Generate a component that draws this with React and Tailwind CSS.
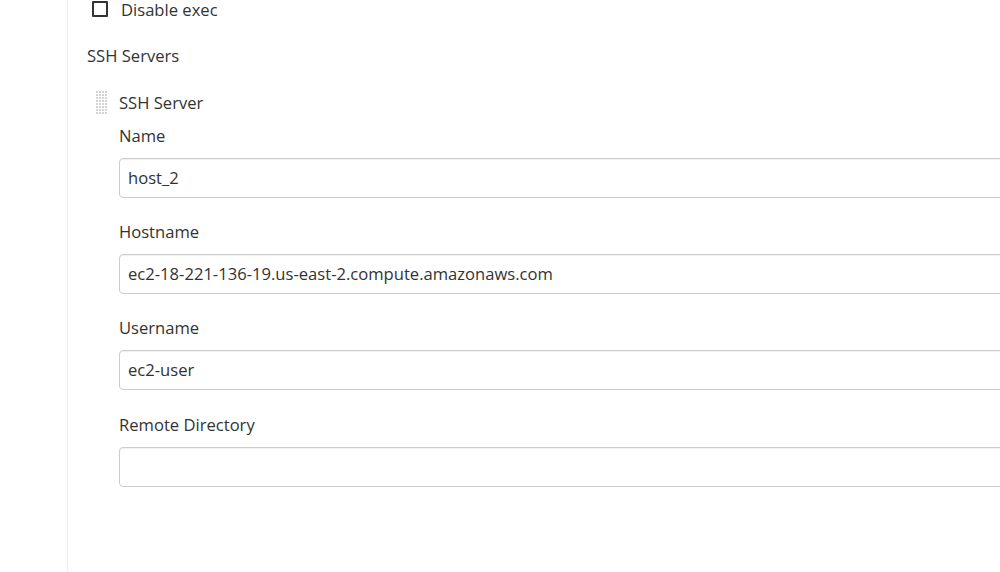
const fields = [
  { label: "Name", value: "host_2" },
  { label: "Hostname", value: "ec2-18-221-136-19.us-east-2.compute.amazonaws.com" },
  { label: "Username", value: "ec2-user" },
  { label: "Remote Directory", value: "" },
];

const DragHandle = () => (
  <svg width="12" height="24" viewBox="0 0 12 24" className="shrink-0">
    <defs>
      <pattern id="dots" width="3" height="3" patternUnits="userSpaceOnUse">
        <rect x="0" y="0" width="2" height="2" fill="#d4d4d4" />
      </pattern>
    </defs>
    <rect x="0" y="0" width="12" height="24" fill="url(#dots)" />
  </svg>
);

export default function App() {
  return (
    <div
      className="w-[1000px] h-[572px] overflow-hidden bg-white flex text-[#333] text-[16.6px]"
      style={{ fontFamily: '"Open Sans", "Noto Sans", sans-serif' }}
    >
      <div className="w-[68px] shrink-0 border-r border-[#ececec]" />
      <div className="flex-1 pl-[19px] min-w-0">
        <div className="flex items-center h-5 ml-[5px]">
          <span className="w-4 h-4 border-2 border-[#333] rounded-[1px] shrink-0 -mt-[2px]" />
          <span className="ml-[13px] leading-5">Disable exec</span>
        </div>
        <div className="mt-[26px] leading-5">SSH Servers</div>
        <div className="mt-[25px] flex items-center h-6 pl-[9px]">
          <DragHandle />
          <span className="ml-[11px] leading-5">SSH Server</span>
        </div>
        <div className="pl-[32px] mt-[11px]">
          {fields.map((f, i) => (
            <div key={f.label} className={i === 3 ? "mt-[25px]" : i > 0 ? "mt-6" : ""}>
              <div className="leading-5">{f.label}</div>
              <div className="mt-3 w-[900px] h-10 border border-[#ccc] rounded-[4px] shadow-[inset_0_1px_1px_rgba(0,0,0,0.06)] flex items-center px-2">
                {f.value}
              </div>
            </div>
          ))}
        </div>
      </div>
    </div>
  );
}
